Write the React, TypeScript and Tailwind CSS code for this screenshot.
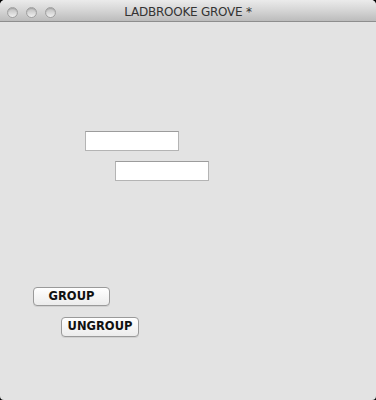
export default function App() {
  return (
    <div className="w-[376px] h-[400px] bg-black overflow-hidden" style={{ fontFamily: '"DejaVu Sans", sans-serif' }}>
      <div className="flex h-full flex-col overflow-hidden rounded-t-[5px] rounded-b-[4px] bg-[#e3e3e3]">
        {/* title bar */}
        <div className="flex h-[22px] shrink-0 items-start border-b border-[#8e8e8e] bg-gradient-to-b from-[#ebebeb] via-[#d5d5d5] to-[#bcbcbc]">
          <div className="flex items-center gap-[8px] pl-[7px] pt-[7px]">
            <span className="size-[11px] rounded-full border border-[#a0a0a0] bg-gradient-to-b from-[#bdbdbd] to-[#f0f0f0] shadow-[inset_0_1px_1px_rgba(0,0,0,0.15)]" />
            <span className="size-[11px] rounded-full border border-[#a0a0a0] bg-gradient-to-b from-[#bdbdbd] to-[#f0f0f0] shadow-[inset_0_1px_1px_rgba(0,0,0,0.15)]" />
            <span className="size-[11px] rounded-full border border-[#a0a0a0] bg-gradient-to-b from-[#bdbdbd] to-[#f0f0f0] shadow-[inset_0_1px_1px_rgba(0,0,0,0.15)]" />
          </div>
          <div className="flex-1 pr-[56px] pt-[6px] text-center text-[12px] leading-none tracking-[-0.25px] text-[#333]">
            LADBROOKE GROVE *
          </div>
        </div>

        {/* content */}
        <div className="flex flex-col items-start">
          <input
            type="text"
            className="ml-[85px] mt-[109px] h-[20px] w-[94px] border border-[#b4b4b4] border-t-[#9c9c9c] bg-white outline-none"
          />
          <input
            type="text"
            className="ml-[115px] mt-[10px] h-[20px] w-[94px] border border-[#b4b4b4] border-t-[#9c9c9c] bg-white outline-none"
          />
          <button
            type="button"
            className="ml-[33px] mt-[106px] flex h-[19px] w-[77px] items-center justify-center rounded-[4px] border border-[#9a9a9a] bg-gradient-to-b from-white to-[#ececec] text-[11.5px] font-bold text-[#111] shadow-[0_1px_0_rgba(0,0,0,0.08)]"
          >
            GROUP
          </button>
          <button
            type="button"
            className="ml-[61px] mt-[11px] flex h-[20px] w-[78px] items-center justify-center rounded-[4px] border border-[#9a9a9a] bg-gradient-to-b from-white to-[#ececec] text-[11.5px] font-bold text-[#111] shadow-[0_1px_0_rgba(0,0,0,0.08)]"
          >
            UNGROUP
          </button>
        </div>
      </div>
    </div>
  )
}
